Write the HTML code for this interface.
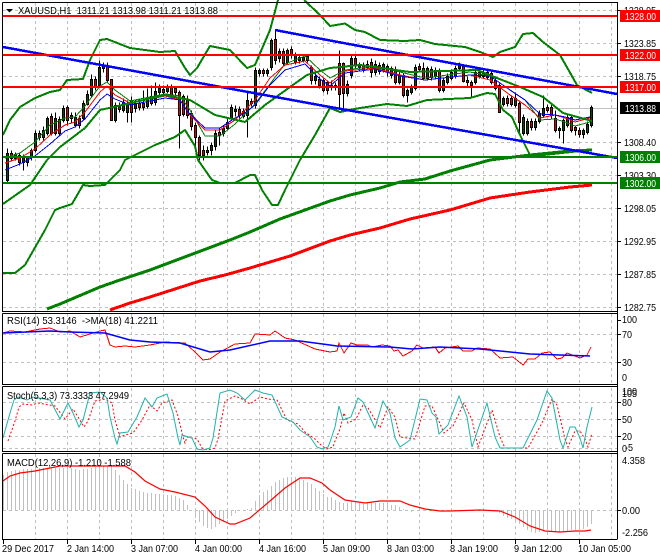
<!DOCTYPE html>
<html><head><meta charset="utf-8"><style>
html,body{margin:0;padding:0;background:#fff}
svg{display:block;position:absolute;left:0;top:0}
text{font-family:"Liberation Sans",sans-serif;font-size:10.5px;fill:#000}
</style></head><body>
<svg width="660" height="560" viewBox="0 0 660 560" xmlns="http://www.w3.org/2000/svg">
<rect width="660" height="560" fill="#fff"/>
<!-- grid -->
<g stroke="#c0c0c0" stroke-width="1" stroke-dasharray="3 3" fill="none" shape-rendering="crispEdges">
<path d="M35.5 3V311M67.5 3V311M99.5 3V311M131.5 3V311M163.5 3V311M195.5 3V311M227.5 3V311M259.5 3V311M291.5 3V311M323.5 3V311M355.5 3V311M387.5 3V311M419.5 3V311M451.5 3V311M483.5 3V311M515.5 3V311M547.5 3V311M579.5 3V311M611.5 3V311"/>
<path d="M35.5 314V384M67.5 314V384M99.5 314V384M131.5 314V384M163.5 314V384M195.5 314V384M227.5 314V384M259.5 314V384M291.5 314V384M323.5 314V384M355.5 314V384M387.5 314V384M419.5 314V384M451.5 314V384M483.5 314V384M515.5 314V384M547.5 314V384M579.5 314V384M611.5 314V384"/>
<path d="M35.5 388V451M67.5 388V451M99.5 388V451M131.5 388V451M163.5 388V451M195.5 388V451M227.5 388V451M259.5 388V451M291.5 388V451M323.5 388V451M355.5 388V451M387.5 388V451M419.5 388V451M451.5 388V451M483.5 388V451M515.5 388V451M547.5 388V451M579.5 388V451M611.5 388V451"/>
<path d="M35.5 454V539M67.5 454V539M99.5 454V539M131.5 454V539M163.5 454V539M195.5 454V539M227.5 454V539M259.5 454V539M291.5 454V539M323.5 454V539M355.5 454V539M387.5 454V539M419.5 454V539M451.5 454V539M483.5 454V539M515.5 454V539M547.5 454V539M579.5 454V539M611.5 454V539"/>
<path d="M3 10.5H617M3 43.5H617M3 76.5H617M3 142.5H617M3 175.5H617M3 208.5H617M3 241.5H617M3 274.5H617M3 307.5H617"/>
<path d="M3 334.5H617M3 362.5H617M3 402.5H617M3 419.5H617M3 436.5H617M3 448.5H617M3 510.5H617"/>
</g>
<path d="M3 108.5H617" stroke="#c0c0c0" shape-rendering="crispEdges"/>
<!-- MACD histogram -->
<path stroke="#c0c0c0" stroke-width="1" fill="none" shape-rendering="crispEdges" d="M3.5 510V475M7.5 510V472M11.5 510V471M15.5 510V470M19.5 510V470M23.5 510V469M27.5 510V469M31.5 510V469M35.5 510V468M39.5 510V468M43.5 510V468M47.5 510V468M51.5 510V468M55.5 510V468M59.5 510V468M63.5 510V468M67.5 510V468M71.5 510V468M75.5 510V469M79.5 510V470M83.5 510V469M87.5 510V469M91.5 510V468M95.5 510V467M99.5 510V466M103.5 510V466M107.5 510V466M111.5 510V466M115.5 510V470M119.5 510V475M123.5 510V480M127.5 510V484M131.5 510V488M135.5 510V489M139.5 510V491M143.5 510V492M147.5 510V493M151.5 510V493M155.5 510V494M159.5 510V494M163.5 510V494M167.5 510V495M171.5 510V495M175.5 510V496M179.5 510V498M183.5 510V500M187.5 510V505M191.5 510V510M195.5 510V518M199.5 510V522M203.5 510V526M207.5 510V528M211.5 510V529M215.5 510V527M219.5 510V524M223.5 510V522M227.5 510V519M231.5 510V516M235.5 510V513M239.5 510V511M243.5 510V511M247.5 510V509M251.5 510V508M255.5 510V501M259.5 510V495M263.5 510V492M267.5 510V490M271.5 510V486M275.5 510V482M279.5 510V480M283.5 510V478M287.5 510V477M291.5 510V477M295.5 510V477M299.5 510V478M303.5 510V480M307.5 510V482M311.5 510V484M315.5 510V488M319.5 510V491M323.5 510V494M327.5 510V497M331.5 510V497M335.5 510V500M339.5 510V502M343.5 510V503M347.5 510V503M351.5 510V501M355.5 510V504M359.5 510V503M363.5 510V504M367.5 510V503M371.5 510V503M375.5 510V503M379.5 510V503M383.5 510V503M387.5 510V504M391.5 510V505M395.5 510V505M399.5 510V507M403.5 510V509M407.5 510V511M411.5 510V512M415.5 510V510M499.5 510V513M503.5 510V516M507.5 510V518M511.5 510V519M515.5 510V521M519.5 510V524M523.5 510V527M527.5 510V530M531.5 510V532M535.5 510V533M539.5 510V532M543.5 510V531M547.5 510V530M551.5 510V531M555.5 510V532M559.5 510V532M563.5 510V531M567.5 510V531M571.5 510V530M575.5 510V530M579.5 510V530M583.5 510V529M587.5 510V527M591.5 510V524"/>
<!-- candles -->
<g transform="translate(.5 .5)" shape-rendering="crispEdges" stroke="#000" stroke-width="1">
<path fill="none" d="M7 148V182M11 150V160M15 152V160M19 152V165M23 154V170M27 156V166M31 148V160M35 130V152M39 130V140M43 126V140M47 116V135M51 113V135M55 112V135M59 116V136M63 105V122M67 105V125M71 112V122M75 112V127M79 115V128M83 100V120M87 90V105M91 74V97M95 76V90M99 60V87M103 62V72M107 62V82M111 79V120M115 102V122M119 102V112M123 98V112M127 100V122M131 96V122M135 100V112M139 98V110M143 90V110M147 88V108M151 85V105M155 82V105M159 84V95M163 85V95M167 84V93M171 84V98M175 86V95M179 90V148M183 94V116M187 95V118M191 110V130M195 122V150M199 135V160M203 145V160M207 146V155M211 142V155M215 130V150M219 128V145M223 125V136M227 118V130M231 104V120M235 105V116M239 106V118M243 108V118M247 92V137M251 98V106M255 67V108M259 68V76M263 68V76M267 68V76M271 38V70M275 30V64M279 48V62M283 48V66M287 48V64M291 46V58M295 52V64M299 54V63M303 54V62M307 54V62M311 65V84M315 72V84M319 76V88M323 78V92M327 80V94M331 80V90M335 82V90M339 50V108M343 62V108M347 80V96M351 54V78M355 55V68M359 62V70M363 62V72M367 60V68M371 58V77M375 60V75M379 62V74M383 62V72M387 64V76M391 66V78M395 66V84M399 72V84M403 72V97M407 88V102M411 84V94M415 64V90M419 63V72M423 62V80M427 66V80M431 66V80M435 67V79M439 68V92M443 78V92M447 73V84M451 69V80M455 65V78M459 62V70M463 64V82M467 76V86M471 80V97M475 70V84M479 69V78M483 68V78M487 70V79M491 71V84M495 76V90M499 83V112M503 96V106M507 95V106M511 96V106M515 92V107M519 100V133M523 114V135M527 118V135M531 118V130M535 118V130M539 110V123M543 95V117M547 104V112M551 104V118M555 110V132M559 126V138M563 118V143M567 114V127M571 115V132M575 125V135M579 127V137M583 128V138M587 121V134M591 105V127"/>
<path fill="#064a06" d="M6 153h2v27h-2zM14 154h2v4h-2zM22 157h2v5h-2zM26 157h2v5h-2zM30 150h2v7h-2zM34 133h2v17h-2zM42 130h2v7h-2zM46 118h2v15h-2zM54 118h2v15h-2zM62 108h2v12h-2zM70 115h2v3h-2zM74 117h2v8h-2zM82 103h2v15h-2zM86 94h2v10h-2zM90 79h2v16h-2zM98 67h2v18h-2zM102 65h2v3h-2zM114 105h2v15h-2zM122 102h2v8h-2zM126 103h2v9h-2zM134 103h2v5h-2zM146 98h2v8h-2zM154 91h2v11h-2zM158 88h2v4h-2zM166 87h2v4h-2zM206 150h2v2h-2zM210 145h2v5h-2zM214 133h2v13h-2zM222 128h2v5h-2zM226 122h2v6h-2zM230 107h2v11h-2zM234 109h2v2h-2zM246 100h2v15h-2zM254 70h2v35h-2zM258 70h2v3h-2zM266 70h2v3h-2zM270 40h2v27h-2zM278 51h2v7h-2zM286 50h2v12h-2zM294 55h2v7h-2zM298 57h2v3h-2zM302 57h2v3h-2zM314 76h2v4h-2zM334 85h2v2h-2zM346 84h2v9h-2zM350 58h2v17h-2zM358 65h2v2h-2zM366 64h2v3h-2zM374 64h2v8h-2zM382 64h2v5h-2zM390 68h2v7h-2zM398 75h2v7h-2zM406 90h2v5h-2zM410 87h2v5h-2zM414 67h2v21h-2zM426 68h2v10h-2zM434 70h2v6h-2zM442 80h2v10h-2zM446 76h2v6h-2zM454 68h2v8h-2zM458 65h2v3h-2zM474 72h2v10h-2zM478 72h2v4h-2zM486 72h2v5h-2zM502 98h2v6h-2zM514 98h2v7h-2zM522 117h2v16h-2zM526 121h2v12h-2zM534 121h2v6h-2zM538 113h2v8h-2zM542 108h2v7h-2zM558 128h2v2h-2zM562 120h2v10h-2zM566 117h2v8h-2zM582 130h2v4h-2zM586 124h2v8h-2zM590 107h2v18h-2z"/>
<path fill="#e00000" d="M10 153h2v5h-2zM18 155h2v7h-2zM38 133h2v4h-2zM50 116h2v17h-2zM58 119h2v14h-2zM66 107h2v13h-2zM78 118h2v7h-2zM94 79h2v7h-2zM106 65h2v15h-2zM110 79h2v41h-2zM118 106h2v3h-2zM130 100h2v12h-2zM138 103h2v4h-2zM142 103h2v4h-2zM150 96h2v7h-2zM162 89h2v3h-2zM170 87h2v9h-2zM174 88h2v4h-2zM178 92h2v23h-2zM182 96h2v18h-2zM186 100h2v15h-2zM190 113h2v13h-2zM194 125h2v12h-2zM198 137h2v18h-2zM202 150h2v5h-2zM218 132h2v3h-2zM238 109h2v6h-2zM242 111h2v5h-2zM250 101h2v2h-2zM262 70h2v3h-2zM274 39h2v21h-2zM282 51h2v12h-2zM290 49h2v6h-2zM306 56h2v4h-2zM310 67h2v13h-2zM318 79h2v6h-2zM322 80h2v10h-2zM326 82h2v8h-2zM330 85h2v2h-2zM338 63h2v31h-2zM342 63h2v30h-2zM354 58h2v7h-2zM362 65h2v4h-2zM370 62h2v10h-2zM378 65h2v6h-2zM386 66h2v5h-2zM394 70h2v12h-2zM402 75h2v20h-2zM418 66h2v3h-2zM422 68h2v10h-2zM430 69h2v8h-2zM438 71h2v19h-2zM450 72h2v6h-2zM462 66h2v15h-2zM466 80h2v2h-2zM470 82h2v3h-2zM482 73h2v3h-2zM490 73h2v9h-2zM494 80h2v8h-2zM498 85h2v27h-2zM506 98h2v5h-2zM510 98h2v6h-2zM518 103h2v19h-2zM530 121h2v6h-2zM546 107h2v3h-2zM550 107h2v8h-2zM554 118h2v12h-2zM570 117h2v13h-2zM574 127h2v3h-2zM578 130h2v4h-2z"/>
</g>
<!-- small MAs -->
<g fill="none" stroke-width="1" shape-rendering="crispEdges">
<path stroke="#008000" d="M5 158L20 153L35 142L50 125L65 118L75 117L85 106L100 86L107 82L115 90L130 101L165 94L180 96L190 110L205 136L220 136L235 124L245 114L255 104L270 84L285 64L305 56L320 70L330 78L345 70L375 66L400 72L425 78L470 72L490 76L510 90L525 100L540 120L555 119L565 122L575 126L590 122"/>
<path stroke="#ff0000" d="M5 163L20 158L35 149L50 135L65 125L75 122L85 112L100 92L107 86L115 95L130 103L165 96L180 100L190 115L205 130L220 130L235 120L245 110L255 100L270 78L285 65L305 61L320 75L330 83L345 71L375 68L400 75L425 80L470 75L490 80L510 95L525 105L540 118L555 115L565 118L575 122L590 118"/>
<path stroke="#0000ff" d="M5 170L20 164L35 156L50 144L65 131L75 127L85 119L100 100L107 94L115 99L130 105L165 98L180 100L187 111L205 128L220 128L235 118L245 113L255 105L270 85L285 70L305 64L320 79L330 86L345 73L375 69L400 76L425 80L470 75L490 76L510 90L525 100L540 114L555 115L565 117L575 120L590 117"/>
</g>
<!-- Bollinger / MA -->
<g fill="none" stroke="#008000" stroke-width="2" stroke-linejoin="round" shape-rendering="crispEdges">
<path d="M3 135L10 120L20 107L35 98L50 92L60 90L67 80L83 79L90 60L100 40L107 39L130 48L160 52L175 51L185 68L190 75L197 68L210 46L230 50L247 68L255 65L270 30L278 0M304 0L320 15L330 26L345 23.5L355 30L365 32L380 40L405 41L420 40L435 44L465 47L480 52L493 57L500 52L515 47L523 34L533 33L543 42L560 55L577 85L592 93"/>
<path d="M3 204L30 185L47 160L60 147L85 128L100 110L118 106L165 95L190 100L215 115L245 122L265 105L290 87L307 75L330 68L360 65L410 72L477 70L497 78L520 87L543 97L563 113L592 121"/>
<path d="M3 273L15 273L25 265L45 230L55 210L60 208L72 204L83 185L90 186L105 185L120 170L125 160L135 155L155 145L175 137L185 130L195 146L198 160L212 180L220 183L235 183L250 175L255 175L262 190L272 205L278 205L285 190L300 160L315 135L330 108L340 112L360 108L387 104L407 106L427 100L470 98L487 93L495 94L503 110L512 117L520 135L530 155L543 155L590 150"/>
</g>
<path fill="none" stroke="#008000" stroke-width="3" shape-rendering="crispEdges" d="M47 309L60 304L100 287L120 280L150 270L190 255L230 240L250 232L280 219L330 201L350 195L380 188L400 182L425 179L450 171L490 160L530 155L570 151L592 150"/>
<path fill="none" stroke="#ff0000" stroke-width="3" shape-rendering="crispEdges" d="M110 310L130 303L150 297L200 281L225 275L250 268L290 256L330 241L350 235L380 228L410 219L450 210L490 198L530 192L570 187L592 185"/>
<!-- blue trend lines -->
<path fill="none" stroke="#0000ff" stroke-width="2.5" shape-rendering="crispEdges" d="M3 47L330 107L617 158M275 30L330 40.5L617 94"/>
<!-- horizontal levels -->
<g shape-rendering="crispEdges" stroke-width="2">
<path stroke="#ff0000" d="M3 16H617M3 55H617M3 87H617"/>
<path stroke="#008000" d="M3 157H617M3 183H617"/>
</g>
<!-- RSI -->
<path fill="none" stroke="#ff0000" shape-rendering="crispEdges" d="M3 333L10 331L25 332L40 329L50 328L60 332L70 331L80 337L90 334L100 331L105 330L110 345L115 347L125 346L135 347L150 345L165 342L185 343L195 352L203 360L210 359L220 352L235 344L250 343L255 334L270 335L275 331L285 338L295 340L315 349L325 351L330 352L337 351L339 343L344 353L351 343L357 345L368 345L372 347L382 345L390 346L394 351L398 350L403 356L412 351L417 345L423 348L435 347L439 353L445 348L458 346L463 351L472 351L477 348L490 349L500 358L513 357L523 365L528 359L535 359L542 353L550 352L557 359L562 358L567 353L580 358L587 355L591 347"/>
<path fill="none" stroke="#0000ff" stroke-width="1.5" d="M3 333L50 331L70 332L105 333L130 340L150 342L180 343L210 352L230 350L270 341L300 341L330 345L337 346L390 347L412 349L440 347L480 349L510 352L530 354L560 355L590 356"/>
<!-- Stoch -->
<path fill="none" stroke="#ff0000" stroke-dasharray="2 2" transform="translate(5 3)" d="M3 438L10 418L14 404L18 401L27 402L33 400L50 403L60 416L68 406L73 414L79 424L83 418L90 398L100 396L107 400L110 417L115 434L120 432L128 430L137 417L145 402L152 408L157 400L167 397L173 413L178 434L180 440L182 434L192 436L197 445L203 447L210 445L213 436L220 398L230 393L237 396L245 401L255 394L263 396L272 397L282 417L293 421L300 429L310 436L317 443L322 446L328 444L330 438L335 426L339 410L343 420L351 416L358 402L363 405L375 425L383 404L390 414L395 434L410 436L420 403L427 403L432 414L439 430L448 423L459 400L467 417L473 444L487 407L495 434L500 445L523 445L537 420L547 396L552 402L560 436L563 444L570 428L575 428L580 436L583 444L587 430"/>
<path fill="none" stroke="#20b2aa" stroke-width="1" d="M3 438L10 413L14 400L18 397L27 400L33 397L50 400L60 419L68 403L73 413L79 427L83 420L90 393L100 392L107 398L110 417L115 438L117 444L120 433L128 432L137 417L145 398L152 407L157 398L167 394L173 413L178 438L180 445L182 435L192 438L197 449L203 450L210 448L213 438L220 393L230 390L237 393L245 400L255 390L263 393L272 395L282 417L293 422L300 430L310 437L317 447L322 449L328 447L330 442L335 427L339 406L343 420L351 417L358 398L363 402L375 428L383 401L390 413L395 438L400 447L410 440L420 399L427 400L432 413L436 417L439 434L448 425L459 396L467 417L472 447L487 403L495 437L500 448L523 448L537 420L547 391L552 398L560 440L563 448L570 427L575 427L580 438L583 448L587 427L592 407"/>
<!-- MACD line -->
<path fill="none" stroke="#ff0000" stroke-width="1.2" d="M3 481L10 476L20 473L35 471L50 468L60 466L80 466L110 466L125 466L135 472L145 481L160 489L175 492L195 497L205 506L215 517L230 524L235 524L250 518L270 501L285 488L300 478L310 478L322 483L330 490L345 500L365 503L380 501L400 501L410 505L425 509L440 511L450 511L480 510L500 511L515 517L530 526L545 531L560 532L575 531L585 531L591 530"/>
<!-- frames -->
<g fill="none" stroke="#000" stroke-width="1" shape-rendering="crispEdges">
<path d="M2.5 2.5H617.5V539M2.5 2.5V311.5H617.5"/>
<path d="M2.5 313.5H617.5M2.5 313.5V384.5H617.5"/>
<path d="M2.5 386.5H617.5M2.5 386.5V451.5H617.5"/>
<path d="M2.5 453.5H617.5M2.5 453.5V539.5H617.5"/>
<path d="M3.5 540V544M67.5 540V544M131.5 540V544M195.5 540V544M259.5 540V544M323.5 540V544M387.5 540V544M451.5 540V544M515.5 540V544M579.5 540V544"/>
<path d="M617 10.5H621M617 43.5H621M617 76.5H621M617 142.5H621M617 175.5H621M617 208.5H621M617 241.5H621M617 274.5H621M617 307.5H621M617 320.5H621M617 334.5H621M617 362.5H621M617 402.5H621M617 419.5H621M617 436.5H621M617 510.5H621"/>
</g>
<path d="M6 9h7l-3.5 3.5z" fill="#000"/>
<!-- labels -->
<text x="18" y="14" textLength="200" lengthAdjust="spacingAndGlyphs" xml:space="preserve">XAUUSD,H1  1311.21 1313.98 1311.21 1313.88</text>
<text x="7" y="324" textLength="151" lengthAdjust="spacingAndGlyphs" xml:space="preserve">RSI(14) 53.3146  -&gt;MA(18) 41.2211</text>
<text x="7" y="399" textLength="122" lengthAdjust="spacingAndGlyphs">Stoch(5,3,3) 73.3333 47.2949</text>
<text x="7" y="466" textLength="124" lengthAdjust="spacingAndGlyphs">MACD(12,26,9) -1.210 -1.588</text>
<text x="624" y="14" textLength="32" lengthAdjust="spacingAndGlyphs">1328.95</text>
<text x="624" y="47" textLength="32" lengthAdjust="spacingAndGlyphs">1323.85</text>
<text x="624" y="80" textLength="32" lengthAdjust="spacingAndGlyphs">1318.75</text>
<text x="624" y="146" textLength="32" lengthAdjust="spacingAndGlyphs">1308.40</text>
<text x="624" y="179" textLength="32" lengthAdjust="spacingAndGlyphs">1303.30</text>
<text x="624" y="212" textLength="32" lengthAdjust="spacingAndGlyphs">1298.05</text>
<text x="624" y="245" textLength="32" lengthAdjust="spacingAndGlyphs">1292.95</text>
<text x="624" y="278" textLength="32" lengthAdjust="spacingAndGlyphs">1287.85</text>
<text x="624" y="311" textLength="32" lengthAdjust="spacingAndGlyphs">1282.75</text>
<rect x="620" y="10" width="40" height="12" fill="#ff0000"/><text x="625" y="20" textLength="31" lengthAdjust="spacingAndGlyphs" style="fill:#fff">1328.00</text>
<rect x="620" y="49" width="40" height="12" fill="#ff0000"/><text x="625" y="59" textLength="31" lengthAdjust="spacingAndGlyphs" style="fill:#fff">1322.00</text>
<rect x="620" y="81" width="40" height="12" fill="#ff0000"/><text x="625" y="91" textLength="31" lengthAdjust="spacingAndGlyphs" style="fill:#fff">1317.00</text>
<rect x="620" y="102" width="40" height="12" fill="#000"/><text x="625" y="112" textLength="31" lengthAdjust="spacingAndGlyphs" style="fill:#fff">1313.88</text>
<rect x="620" y="151" width="40" height="12" fill="#008000"/><text x="625" y="161" textLength="31" lengthAdjust="spacingAndGlyphs" style="fill:#fff">1306.00</text>
<rect x="620" y="177" width="40" height="12" fill="#008000"/><text x="625" y="187" textLength="31" lengthAdjust="spacingAndGlyphs" style="fill:#fff">1302.00</text>
<text x="622" y="323" textLength="15" lengthAdjust="spacingAndGlyphs">100</text>
<text x="622" y="338" textLength="10" lengthAdjust="spacingAndGlyphs">70</text>
<text x="622" y="366" textLength="10" lengthAdjust="spacingAndGlyphs">30</text>
<text x="622" y="381" textLength="5" lengthAdjust="spacingAndGlyphs">0</text>
<text x="622" y="395" textLength="15" lengthAdjust="spacingAndGlyphs">100</text>
<text x="622" y="397" textLength="15" lengthAdjust="spacingAndGlyphs">105</text>
<text x="622" y="406" textLength="10" lengthAdjust="spacingAndGlyphs">80</text>
<text x="622" y="423" textLength="10" lengthAdjust="spacingAndGlyphs">50</text>
<text x="622" y="440" textLength="10" lengthAdjust="spacingAndGlyphs">20</text>
<text x="622" y="452" textLength="5" lengthAdjust="spacingAndGlyphs">0</text>
<text x="625" y="451" textLength="8" lengthAdjust="spacingAndGlyphs">-5</text>
<text x="622" y="464" textLength="23" lengthAdjust="spacingAndGlyphs">4.358</text>
<text x="622" y="514" textLength="18" lengthAdjust="spacingAndGlyphs">0.00</text>
<text x="622" y="536" textLength="26" lengthAdjust="spacingAndGlyphs">-2.256</text>
<text x="2" y="552" textLength="52" lengthAdjust="spacingAndGlyphs">29 Dec 2017</text>
<text x="67" y="552" textLength="47" lengthAdjust="spacingAndGlyphs">2 Jan 14:00</text>
<text x="131" y="552" textLength="47" lengthAdjust="spacingAndGlyphs">3 Jan 07:00</text>
<text x="195" y="552" textLength="47" lengthAdjust="spacingAndGlyphs">4 Jan 00:00</text>
<text x="259" y="552" textLength="47" lengthAdjust="spacingAndGlyphs">4 Jan 16:00</text>
<text x="323" y="552" textLength="47" lengthAdjust="spacingAndGlyphs">5 Jan 09:00</text>
<text x="387" y="552" textLength="47" lengthAdjust="spacingAndGlyphs">8 Jan 03:00</text>
<text x="450" y="552" textLength="48" lengthAdjust="spacingAndGlyphs">8 Jan 19:00</text>
<text x="514" y="552" textLength="48" lengthAdjust="spacingAndGlyphs">9 Jan 12:00</text>
<text x="578" y="552" textLength="53" lengthAdjust="spacingAndGlyphs">10 Jan 05:00</text>
</svg>
</body></html>
